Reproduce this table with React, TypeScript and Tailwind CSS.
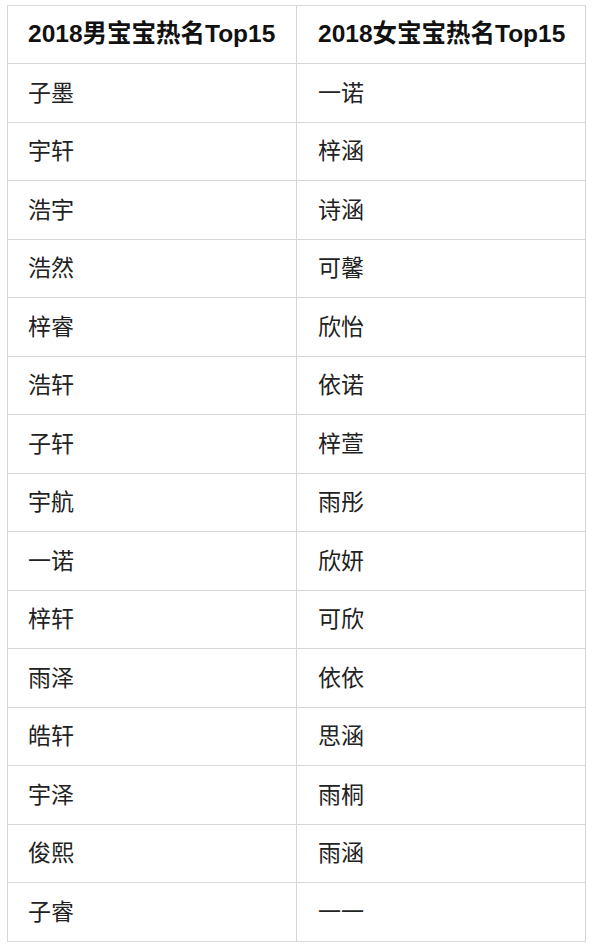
import React from "react";

const boys = ["子墨","宇轩","浩宇","浩然","梓睿","浩轩","子轩","宇航","一诺","梓轩","雨泽","皓轩","宇泽","俊熙","子睿"];
const girls = ["一诺","梓涵","诗涵","可馨","欣怡","依诺","梓萱","雨彤","欣妍","可欣","依依","思涵","雨桐","雨涵","一一"];

export default function App() {
  const font = { fontFamily: '"Liberation Sans", "Noto Sans CJK SC", sans-serif' };
  return (
    <div className="w-[600px] h-[948px] bg-[#f4f4f6] overflow-hidden" style={font}>
      <div className="bg-white pl-[7px] pt-[5px] pr-[14px] pb-[6px]">
        <div className="grid grid-cols-2 border-t border-l border-[#d6d6d6] w-[579px]">
          <div className="h-[58px] border-r border-b border-[#d6d6d6] flex items-center pl-[20px] text-[24.5px] font-bold text-[#111]">2018男宝宝热名Top15</div>
          <div className="h-[58px] border-r border-b border-[#d6d6d6] flex items-center pl-[21px] text-[24.5px] font-bold text-[#111]">2018女宝宝热名Top15</div>
          {boys.map((b, i) => (
            <React.Fragment key={i}>
              <div className="h-[58.5px] border-r border-b border-[#d6d6d6] flex items-center pl-[20px] text-[23px] text-[#222]">{b}</div>
              <div className="h-[58.5px] border-r border-b border-[#d6d6d6] flex items-center pl-[21px] text-[23px] text-[#222]">{girls[i]}</div>
            </React.Fragment>
          ))}
        </div>
      </div>
    </div>
  );
}
